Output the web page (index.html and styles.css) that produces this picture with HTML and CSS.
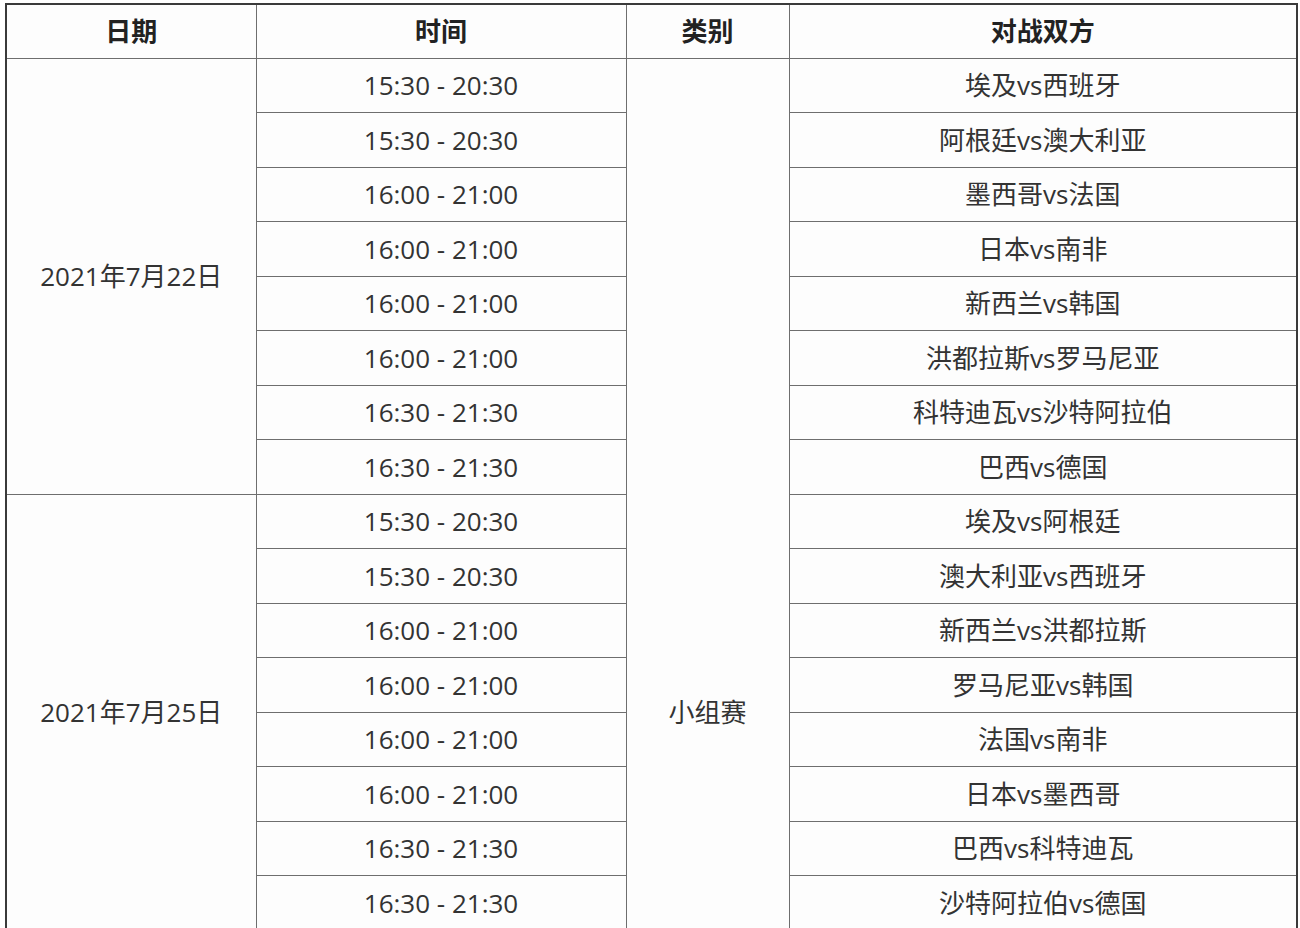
FILE: index.html
```html
<!DOCTYPE html>
<html lang="zh-CN">
<head>
<meta charset="utf-8">
<title>赛程</title>
<link rel="stylesheet" href="styles.css">
</head>
<body>
<table class="schedule">
  <colgroup>
    <col class="c-date">
    <col class="c-time">
    <col class="c-type">
    <col class="c-match">
  </colgroup>
  <thead>
    <tr class="head-row">
      <th>日期</th>
      <th>时间</th>
      <th>类别</th>
      <th>对战双方</th>
    </tr>
  </thead>
  <tbody>
    <tr><td rowspan="8">2021年7月22日</td><td>15:30 - 20:30</td><td rowspan="24">小组赛</td><td>埃及vs西班牙</td></tr>
    <tr><td>15:30 - 20:30</td><td>阿根廷vs澳大利亚</td></tr>
    <tr><td>16:00 - 21:00</td><td>墨西哥vs法国</td></tr>
    <tr><td>16:00 - 21:00</td><td>日本vs南非</td></tr>
    <tr><td>16:00 - 21:00</td><td>新西兰vs韩国</td></tr>
    <tr><td>16:00 - 21:00</td><td>洪都拉斯vs罗马尼亚</td></tr>
    <tr><td>16:30 - 21:30</td><td>科特迪瓦vs沙特阿拉伯</td></tr>
    <tr><td>16:30 - 21:30</td><td>巴西vs德国</td></tr>
    <tr><td rowspan="8">2021年7月25日</td><td>15:30 - 20:30</td><td>埃及vs阿根廷</td></tr>
    <tr><td>15:30 - 20:30</td><td>澳大利亚vs西班牙</td></tr>
    <tr><td>16:00 - 21:00</td><td>新西兰vs洪都拉斯</td></tr>
    <tr><td>16:00 - 21:00</td><td>罗马尼亚vs韩国</td></tr>
    <tr><td>16:00 - 21:00</td><td>法国vs南非</td></tr>
    <tr><td>16:00 - 21:00</td><td>日本vs墨西哥</td></tr>
    <tr><td>16:30 - 21:30</td><td>巴西vs科特迪瓦</td></tr>
    <tr><td>16:30 - 21:30</td><td>沙特阿拉伯vs德国</td></tr>
    <tr><td rowspan="8">2021年7月28日</td><td>16:00 - 21:00</td><td>澳大利亚vs埃及</td></tr>
    <tr><td>16:00 - 21:00</td><td>西班牙vs阿根廷</td></tr>
    <tr><td>19:00 - 24:00</td><td>南非vs墨西哥</td></tr>
    <tr><td>19:00 - 24:00</td><td>法国vs日本</td></tr>
    <tr><td>19:30 - 24:30</td><td>韩国vs洪都拉斯</td></tr>
    <tr><td>19:30 - 24:30</td><td>罗马尼亚vs新西兰</td></tr>
    <tr><td>19:30 - 24:30</td><td>沙特阿拉伯vs巴西</td></tr>
    <tr><td>19:30 - 24:30</td><td>德国vs科特迪瓦</td></tr>
  </tbody>
</table>
</body>
</html>
```
FILE: styles.css
```css
html, body {
  margin: 0;
  padding: 0;
  background: #ffffff;
}

body {
  padding: 3px 0 0 5px;
  font-family: "Open Sans", "Noto Sans CJK SC", sans-serif;
  color: #333333;
}

.schedule {
  border-collapse: collapse;
  table-layout: fixed;
  width: 1291px;
  border: 2px solid #3a3a3a;
  background: #fdfdfd;
}

.c-date { width: 250px; }
.c-time { width: 370px; }
.c-type { width: 163px; }
.c-match { width: 508px; }

.schedule th,
.schedule td {
  border: 1px solid #6e6e6e;
  text-align: center;
  vertical-align: middle;
  padding: 0;
  font-size: 26px;
  line-height: 30px;
}

.schedule th {
  font-weight: bold;
  color: #222222;
}

.head-row {
  height: 54px;
}

.schedule tbody tr {
  height: 54.5px;
}
```
